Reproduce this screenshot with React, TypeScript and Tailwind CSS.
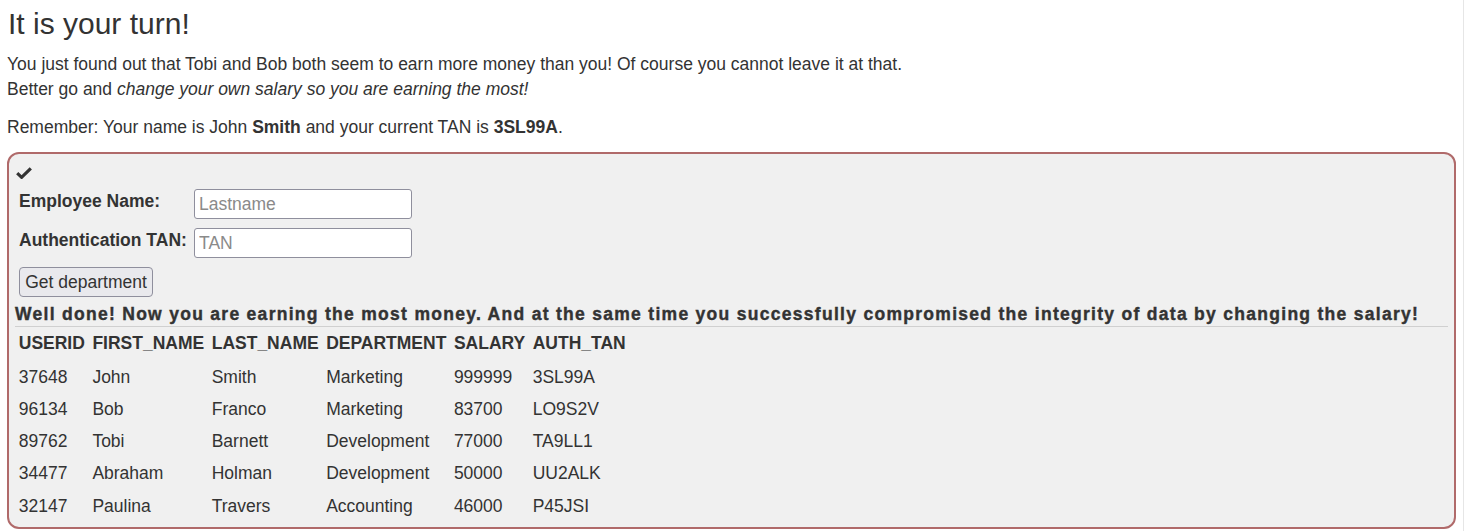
import React from "react";

const rows = [
  ["37648", "John", "Smith", "Marketing", "999999", "3SL99A"],
  ["96134", "Bob", "Franco", "Marketing", "83700", "LO9S2V"],
  ["89762", "Tobi", "Barnett", "Development", "77000", "TA9LL1"],
  ["34477", "Abraham", "Holman", "Development", "50000", "UU2ALK"],
  ["32147", "Paulina", "Travers", "Accounting", "46000", "P45JSI"],
];

const headers = ["USERID", "FIRST_NAME", "LAST_NAME", "DEPARTMENT", "SALARY", "AUTH_TAN"];

export default function App() {
  return (
    <div
      className="w-[1464px] h-[531px] border-r border-[#e6e6e6] bg-white pl-[7px] pr-[7px] pt-[7px] text-[#333333] text-[17.5px] leading-[25px] overflow-hidden"
      style={{ fontFamily: '"Liberation Sans", Arial, Helvetica, sans-serif' }}
    >
      <h3 className="text-[30px] leading-[33px] font-normal pl-[1px] mb-[12px]">It is your turn!</h3>
      <p className="mb-[12.5px]">
        You just found out that Tobi and Bob both seem to earn more money than you! Of course you cannot leave it at that.
        <br />
        Better go and <i>change your own salary so you are earning the most!</i>
      </p>
      <p className="mb-[12.5px]">
        Remember: Your name is John <b>Smith</b> and your current TAN is <b>3SL99A</b>.
      </p>
      <div className="border-2 border-[#b06a6a] rounded-[12px] bg-[#f0f0f0] px-[6px] pt-[6px] pb-[5px]">
        <div className="h-[25px] flex items-center pl-[1px]">
          <svg width="16" height="12" viewBox="0 0 16 12" className="block">
            <path d="M1.2 6.2 L5.6 10.3 L14.8 1.3" fill="none" stroke="#333333" strokeWidth="3.2" strokeLinejoin="miter" strokeLinecap="butt" />
          </svg>
        </div>
        <div className="mt-[4px] flex items-start">
          <label className="w-[179px] pl-[4px] font-bold">Employee Name:</label>
          <input
            placeholder="Lastname"
            className="w-[218px] h-[30px] border border-[#8f8f9d] rounded-[3px] bg-white px-[4px] text-[17.5px] placeholder:text-[#8a8a8a] outline-none"
          />
        </div>
        <div className="mt-[9px] flex items-start">
          <label className="w-[179px] pl-[4px] font-bold">Authentication TAN:</label>
          <input
            placeholder="TAN"
            className="w-[218px] h-[30px] border border-[#8f8f9d] rounded-[3px] bg-white px-[4px] text-[17.5px] placeholder:text-[#8a8a8a] outline-none"
          />
        </div>
        <div className="mt-[9px] pl-[4px]">
          <button className="w-[134px] h-[30px] border border-[#8f8f9d] rounded-[4px] bg-[#e9e9ed] text-[17.5px] text-[#333333]">
            Get department
          </button>
        </div>
        <div className="mt-[5px] h-[24px] font-bold tracking-[1.29px] whitespace-nowrap [-webkit-text-stroke:0.4px_#333333]">
          Well done! Now you are earning the most money. And at the same time you successfully compromised the integrity of data by changing the salary!
        </div>
        <div className="h-px bg-[#d0d0d0]" />
        <table className="border-collapse">
          <thead>
            <tr className="h-[34px]">
              {headers.map((h) => (
                <th key={h} className="text-left font-bold px-[3.75px] pt-[4px] align-top">
                  {h}
                </th>
              ))}
            </tr>
          </thead>
          <tbody>
            {rows.map((r) => (
              <tr key={r[0]} className="h-[32.25px]">
                {r.map((c, i) => (
                  <td key={i} className="px-[3.75px] align-middle">
                    {c}
                  </td>
                ))}
              </tr>
            ))}
          </tbody>
        </table>
      </div>
    </div>
  );
}
